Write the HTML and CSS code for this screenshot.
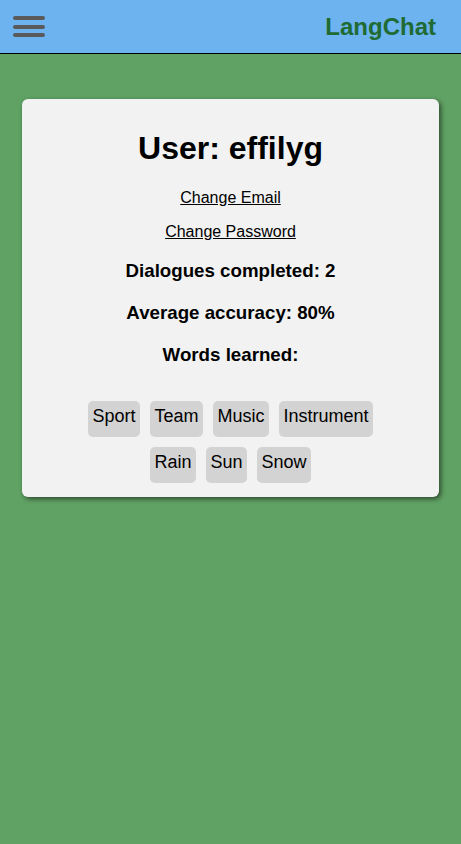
FILE: index.html
```html
<!DOCTYPE html>
<html lang="en">
<head>
<meta charset="utf-8">
<title>LangChat</title>
<link rel="stylesheet" href="styles.css">
</head>
<body>
<header class="topbar">
  <div class="menu-btn" aria-label="Menu">
    <span class="bar"></span>
    <span class="bar"></span>
    <span class="bar"></span>
  </div>
  <div class="brand">LangChat</div>
</header>
<main class="content">
  <section class="card">
    <h1 class="title">User: effilyg</h1>
    <p class="link-row"><a href="#" class="link">Change Email</a></p>
    <p class="link-row"><a href="#" class="link">Change Password</a></p>
    <h3 class="stat">Dialogues completed: 2</h3>
    <h3 class="stat">Average accuracy: 80%</h3>
    <h3 class="stat">Words learned:</h3>
    <div class="tags">
      <span class="tag">Sport</span>
      <span class="tag">Team</span>
      <span class="tag">Music</span>
      <span class="tag">Instrument</span>
      <span class="tag">Rain</span>
      <span class="tag">Sun</span>
      <span class="tag">Snow</span>
    </div>
  </section>
</main>
</body>
</html>
```
FILE: styles.css
```css
html, body {
  margin: 0;
  padding: 0;
}
body {
  background: #60a264;
  font-family: "Liberation Sans", Arial, sans-serif;
  color: #000;
  min-height: 844px;
}
.topbar {
  height: 53px;
  background: #6cb3ef;
  border-bottom: 1px solid #000;
  display: flex;
  align-items: center;
  justify-content: space-between;
  padding: 0 25px 0 13px;
}
.menu-btn {
  width: 32px;
  display: flex;
  flex-direction: column;
  gap: 4.5px;
}
.bar {
  display: block;
  height: 4px;
  border-radius: 2px;
  background: #5a5a5a;
}
.brand {
  font-size: 24px;
  font-weight: bold;
  color: #1f6b33;
}
.content {
  padding: 45px 22px;
}
.card {
  background: #f2f2f2;
  border-radius: 6px;
  padding: 10px 10px 14px;
  text-align: center;
  box-shadow: 2px 2px 5px rgba(0, 0, 0, 0.55);
}
.title {
  font-size: 32px;
  font-weight: bold;
  margin: 21.44px 0;
}
.link-row {
  font-size: 16px;
  margin: 16px 0;
}
.link {
  color: #000;
  text-decoration: underline;
}
.stat {
  font-size: 18.72px;
  line-height: 22.5px;
  font-weight: bold;
  margin: 19.5px 0;
}
.tags {
  max-width: 310px;
  margin: 0 auto;
  padding-top: 14.5px;
  display: flex;
  flex-wrap: wrap;
  justify-content: center;
  gap: 10px;
}
.tag {
  background: #d3d3d3;
  border-radius: 5px;
  padding: 5px 4.5px 10px;
  font-size: 18px;
}
```
